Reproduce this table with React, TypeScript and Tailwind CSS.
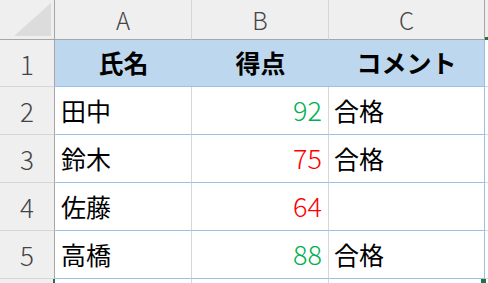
import React from "react";

const font = { fontFamily: '"Noto Sans CJK JP", "Noto Sans", sans-serif' };

type Row = { n: number; name: string; score: number; note: string };

const rows: Row[] = [
  { n: 2, name: "田中", score: 92, note: "合格" },
  { n: 3, name: "鈴木", score: 75, note: "合格" },
  { n: 4, name: "佐藤", score: 64, note: "" },
  { n: 5, name: "高橋", score: 88, note: "合格" },
];

function RowHead({ n, h }: { n: number; h: string }) {
  return (
    <div
      className={`flex items-center justify-center bg-[#efefef] border-r border-r-[#a6a6a6] border-b border-b-[#d6d6d6] text-[26px] font-light text-[#444] ${h}`}
    >
      {n}
    </div>
  );
}

export default function App() {
  return (
    <div className="w-[488px] h-[283px] overflow-hidden bg-white" style={font}>
      <div className="grid grid-cols-[55px_137px_137px_156px_3px]">
        {/* column letters */}
        <div className="relative h-[40px] bg-[#efefef] border-r border-r-[#a6a6a6] border-b border-b-[#a6a6a6]">
          <svg className="absolute left-0 top-0" width="54" height="39" viewBox="0 0 54 39">
            <polygon points="14,36 51,36 51,3" fill="#dcdcdc" />
          </svg>
        </div>
        {["A", "B", "C"].map((c, i) => (
          <div
            key={c}
            className={`flex items-center justify-center h-[40px] bg-[#efefef] border-b border-b-[#a6a6a6] border-r text-[24px] font-light text-[#444] ${
              i === 2 ? "border-r-[#a6a6a6]" : "border-r-[#d6d6d6]"
            }`}
          >
            {c}
          </div>
        ))}
        <div className="relative h-[40px] bg-[#efefef] border-b border-b-[#a6a6a6]">
          <div className="absolute left-0 bottom-[-1px] w-[3px] h-[3px] bg-[#217346]" />
        </div>

        {/* header row 1 */}
        <RowHead n={1} h="h-[47px]" />
        {["氏名", "得点", "コメント"].map((t, i) => (
          <div
            key={t}
            className={`flex items-center justify-center h-[47px] bg-[#bdd7ee] border-b border-b-[#9bc2e6] font-bold text-[25px] text-black ${
              i === 2 ? "border-r border-r-[#9bc2e6]" : ""
            }`}
          >
            {t}
          </div>
        ))}
        <div className="h-[47px] border-b border-b-[#d6d6d6]" />

        {rows.map((r) => (
          <React.Fragment key={r.n}>
            <RowHead n={r.n} h="h-[48px]" />
            <div className="flex items-center h-[48px] pl-[6px] border-b border-b-[#9bc2e6] border-r border-r-[#d6d6d6] text-[25px] text-black">
              {r.name}
            </div>
            <div
              className={`flex items-center justify-end h-[48px] pr-[6px] border-b border-b-[#9bc2e6] border-r border-r-[#d6d6d6] text-[27px] font-light ${
                r.score >= 80 ? "text-[#00b050]" : "text-[#ff0000]"
              }`}
            >
              {r.score}
            </div>
            <div className="flex items-center h-[48px] pl-[5px] border-b border-b-[#9bc2e6] border-r border-r-[#9bc2e6] text-[25px] text-black">
              {r.note}
            </div>
            <div className="h-[48px] border-b border-b-[#d6d6d6]" />
          </React.Fragment>
        ))}
      </div>
      <div className="grid grid-cols-[55px_137px_137px_156px_3px] h-[4px]">
        <div className="relative bg-[#efefef] border-r border-r-[#a6a6a6]">
          <div className="absolute right-[-1px] top-0 w-[2px] h-[4px] bg-[#217346]" />
        </div>
        <div className="border-r border-r-[#d6d6d6]" />
        <div className="border-r border-r-[#d6d6d6]" />
        <div className="relative border-r border-r-[#9bc2e6]">
          <div className="absolute right-[-2px] top-0 w-[5px] h-[4px] bg-[#217346]" />
        </div>
        <div />
      </div>
    </div>
  );
}
